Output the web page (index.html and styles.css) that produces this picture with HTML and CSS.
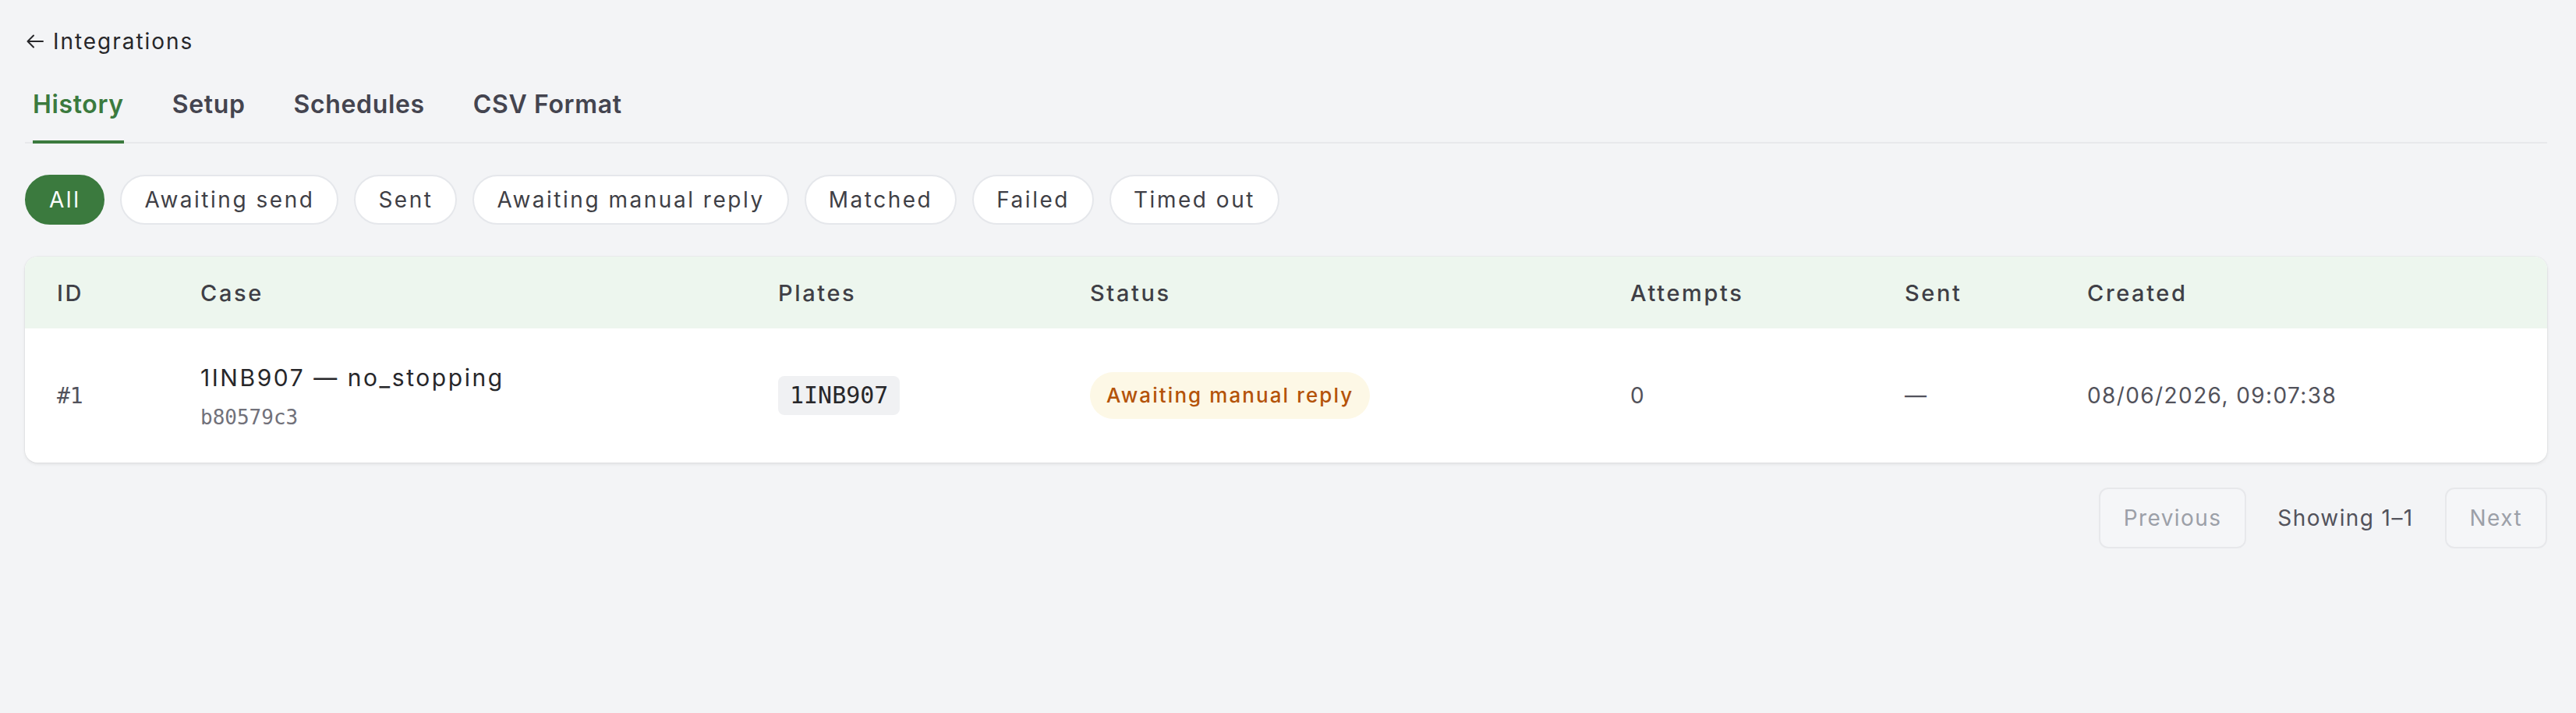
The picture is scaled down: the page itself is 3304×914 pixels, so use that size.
FILE: index.html
```html
<!DOCTYPE html>
<html lang="en">
<head>
    <meta charset="UTF-8">
    <meta name="viewport" content="width=device-width, initial-scale=1.0">
    <title>Integration History</title>
    <link rel="stylesheet" href="styles.css">
</head>
<body>
    <a class="back-link" href="#">
        <svg class="back-arrow" viewBox="0 0 22 18" width="22" height="18">
            <path d="M21 9H2M9 1.5L1.5 9L9 16.5" fill="none" stroke="#27272a" stroke-width="2" stroke-linecap="round" stroke-linejoin="round"/>
        </svg>
        <span>Integrations</span>
    </a>

    <nav class="tabs">
        <a class="tab active" href="#">History</a>
        <a class="tab" href="#">Setup</a>
        <a class="tab" href="#">Schedules</a>
        <a class="tab" href="#">CSV Format</a>
    </nav>

    <div class="filters">
        <button class="pill active">All</button>
        <button class="pill">Awaiting send</button>
        <button class="pill">Sent</button>
        <button class="pill">Awaiting manual reply</button>
        <button class="pill">Matched</button>
        <button class="pill">Failed</button>
        <button class="pill">Timed out</button>
    </div>

    <div class="card">
        <table class="history">
            <colgroup>
                <col style="width: 184px">
                <col style="width: 741px">
                <col style="width: 400px">
                <col style="width: 693px">
                <col style="width: 352px">
                <col style="width: 234px">
                <col style="width: 631px">
            </colgroup>
            <thead>
                <tr>
                    <th>ID</th>
                    <th>Case</th>
                    <th>Plates</th>
                    <th>Status</th>
                    <th>Attempts</th>
                    <th>Sent</th>
                    <th>Created</th>
                </tr>
            </thead>
            <tbody>
                <tr>
                    <td class="mono muted">#1</td>
                    <td>
                        <div class="case-title">1INB907 — no_stopping</div>
                        <div class="case-hash">b80579c3</div>
                    </td>
                    <td><span class="plate">1INB907</span></td>
                    <td><span class="badge awaiting">Awaiting manual reply</span></td>
                    <td class="muted">0</td>
                    <td class="muted">—</td>
                    <td class="muted">08/06/2026, 09:07:38</td>
                </tr>
            </tbody>
        </table>
    </div>

    <div class="pager">
        <button class="pager-btn" disabled>Previous</button>
        <span class="pager-info">Showing 1–1</span>
        <button class="pager-btn" disabled>Next</button>
    </div>
</body>
</html>
```

FILE: styles.css
```css
body {
    margin: 0;
    padding: 32px 37px 32px 32px;
    background-color: #f3f4f6;
    font-family: 'Inter', 'DejaVu Sans', sans-serif;
    color: #27272a;
}

.back-link {
    display: inline-flex;
    align-items: center;
    gap: 12px;
    margin-left: 2px;
    font-size: 28px;
    line-height: 42px;
    letter-spacing: 0.07em;
    color: #27272a;
    text-decoration: none;
}

/* tabs */
.tabs {
    display: flex;
    gap: 62px;
    margin-top: 36px;
    padding-left: 10px;
    border-bottom: 2px solid #e7e8eb;
}
.tab {
    font-size: 32px;
    line-height: 48px;
    font-weight: 600;
    letter-spacing: 0.02em;
    color: #44444f;
    text-decoration: none;
    padding-bottom: 22px;
    border-bottom: 4px solid transparent;
    margin-bottom: -2px;
}
.tab.active {
    color: #3b7a3e;
    border-bottom-color: #3b7a3e;
}

/* filter pills */
.filters {
    display: flex;
    gap: 20px;
    margin-top: 40px;
}
.pill {
    font-family: inherit;
    font-size: 28px;
    line-height: 40px;
    letter-spacing: 0.09em;
    padding: 10px 29px;
    border: 2px solid #e5e7eb;
    border-radius: 999px;
    background-color: #ffffff;
    color: #3f3f46;
    cursor: pointer;
}
.pill.active {
    background-color: #3b7a3e;
    border-color: #3b7a3e;
    color: #ffffff;
}

/* table card */
.card {
    margin-top: 41px;
    background-color: #ffffff;
    border-radius: 16px;
    overflow: hidden;
    box-shadow: 0 2px 4px rgba(0, 0, 0, 0.08), 0 0 0 1px rgba(0, 0, 0, 0.03);
}
.history {
    width: 100%;
    border-collapse: collapse;
    table-layout: fixed;
}
.history th {
    height: 92px;
    padding: 0 41px;
    text-align: left;
    font-size: 29px;
    font-weight: 500;
    letter-spacing: 0.09em;
    color: #3f3f46;
    background-color: #edf6ee;
}
.history td {
    height: 172px;
    padding: 0 41px;
    font-size: 28px;
    letter-spacing: 0.05em;
    vertical-align: middle;
}
.muted {
    color: #52525b;
}
.mono {
    font-family: 'DejaVu Sans Mono', monospace;
    letter-spacing: 0 !important;
}
.case-title {
    font-size: 30px;
    font-weight: 400;
    letter-spacing: 0.085em;
    color: #27272a;
    line-height: 40px;
}
.case-hash {
    margin-top: 16px;
    font-family: 'DejaVu Sans Mono', monospace;
    font-size: 26px;
    letter-spacing: 0;
    color: #71717a;
}
.plate {
    display: inline-block;
    padding: 0 15px;
    line-height: 50px;
    font-family: 'DejaVu Sans Mono', monospace;
    font-size: 30px;
    letter-spacing: 0;
    color: #27272a;
    background-color: #f0f1f3;
    border-radius: 8px;
}
.badge {
    display: inline-block;
    padding: 0 21px;
    line-height: 60px;
    font-size: 26px;
    font-weight: 500;
    letter-spacing: 0.08em;
    border-radius: 999px;
}
.badge.awaiting {
    background-color: #fdf8e6;
    color: #b45309;
}

/* pagination */
.pager {
    display: flex;
    justify-content: flex-end;
    align-items: center;
    gap: 40px;
    margin-top: 32px;
}
.pager-btn {
    font-family: inherit;
    font-size: 28px;
    line-height: 40px;
    letter-spacing: 0.05em;
    padding: 17px 30px;
    border: 2px solid #e7e8eb;
    border-radius: 12px;
    background-color: #f5f6f8;
    color: #9ca0a8;
}
.pager-info {
    font-size: 28px;
    letter-spacing: 0.05em;
    color: #52525b;
}
```
